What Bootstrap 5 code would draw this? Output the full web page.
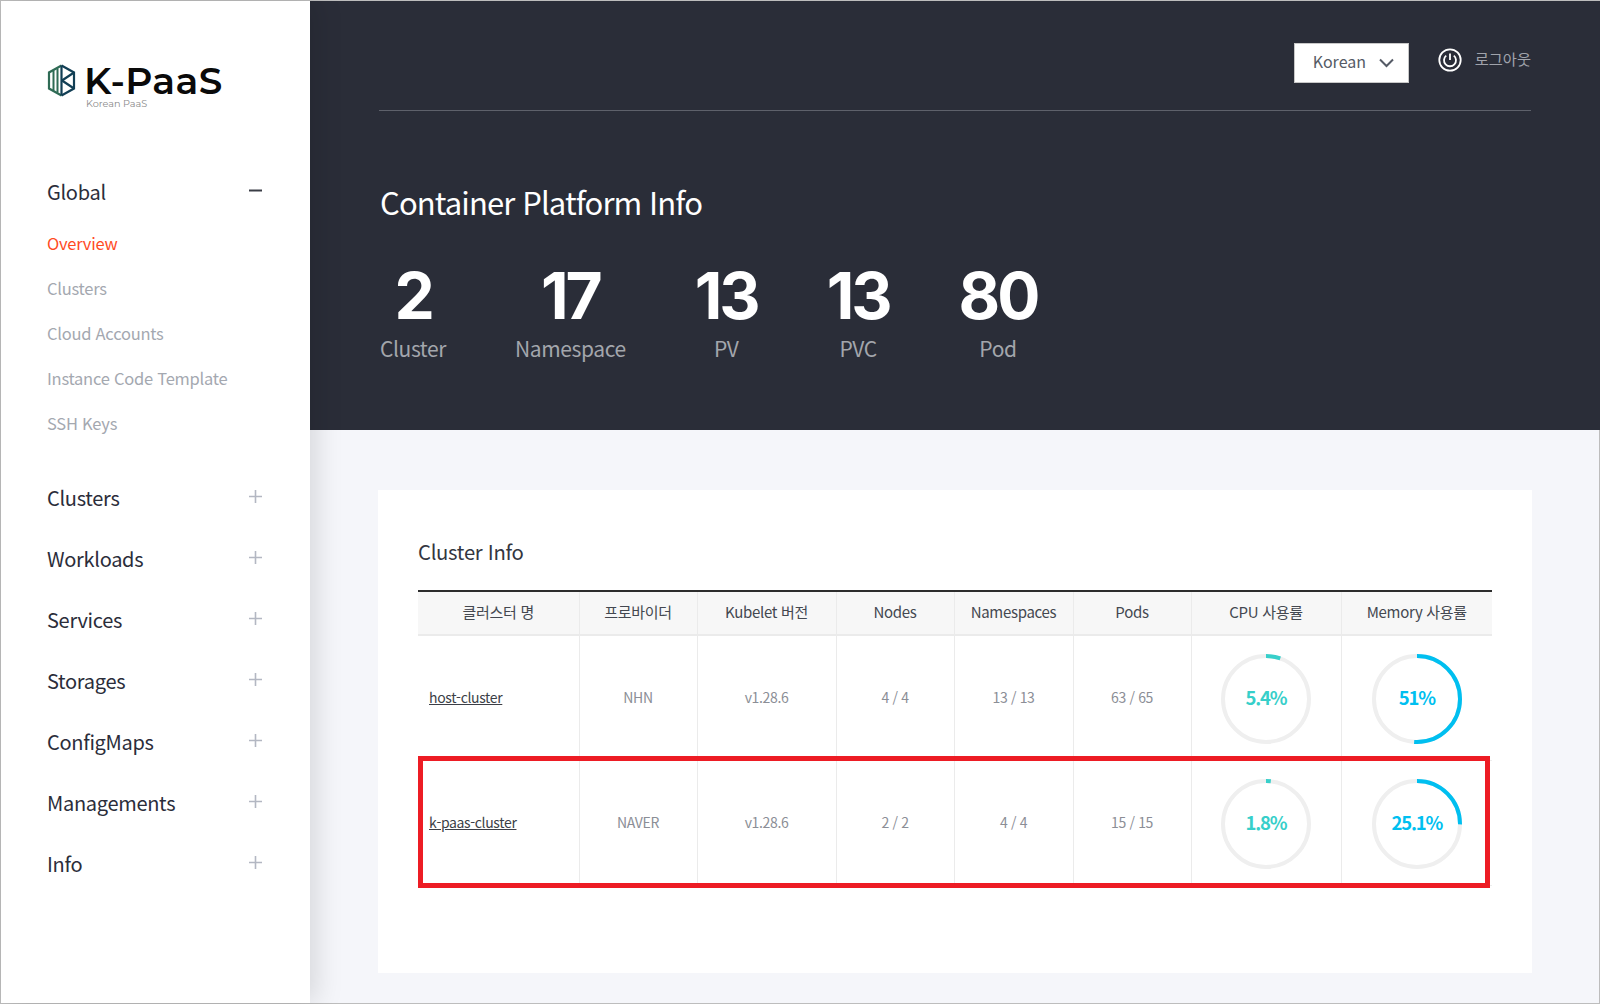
<!DOCTYPE html>
<html lang="ko">
  <head>
    <meta charset="UTF-8" />
    <meta name="viewport" content="width=device-width, initial-scale=1.0" />
    <title>K-PaaS Overview</title>
    <link
      href="https://cdn.jsdelivr.net/npm/bootstrap@5.3.0/dist/css/bootstrap.min.css"
      rel="stylesheet"
    />
    <style>
      html, body {
        height: 100%;
        margin: 0;
        overflow: hidden;
      }

      body {
        font-family: "Noto Sans CJK KR", "Noto Sans", sans-serif;
        background: #f5f6fa;
      }

      .page-shell {
        height: 1004px;
        border: 1px solid #bdbdbd;
      }

      /* sidebar */
      .side-panel {
        width: 309px;
        flex: none;
        background: #fff;
        padding: 65px 46px 0;
        box-shadow: 6px 0 26px rgba(0, 0, 0, 0.13);
        position: relative;
        z-index: 2;
      }

      .brand-row {
        height: 46px;
        margin-bottom: 49px;
      }

      .brand-logo {
        margin-top: -2px;
      }

      .brand-name {
        font-family: "Montserrat", Lato, "Noto Sans", sans-serif;
        font-size: 37.5px;
        line-height: 29px;
        font-weight: 600;
        color: #0a0a0a;
        letter-spacing: 0.4px;
      }

      .brand-sub {
        font-family: "Montserrat", Lato, "Noto Sans", sans-serif;
        font-size: 9.7px;
        line-height: 12px;
        color: #8a8a8a;
        margin-top: 3px;
        padding-left: 2px;
      }

      .menu-head {
        height: 61px;
        font-size: 20px;
        letter-spacing: -0.3px;
        color: #2b2d3a;
        padding-right: 2px;
      }

      .menu-head svg {
        margin-top: -2px;
      }

      .menu-sub {
        margin: -1px 0 21px;
      }

      .menu-sub a {
        display: flex;
        align-items: center;
        height: 45px;
        font-size: 16.5px;
        letter-spacing: -0.25px;
        color: #a4a8b0;
        text-decoration: none;
      }

      .menu-sub a.is-current {
        color: #ff4b1f;
      }

      /* header band */
      .top-band {
        height: 429px;
        background: #2a2d38;
        padding: 0 69px 0 69px;
      }

      .top-bar {
        height: 110px;
        border-bottom: 1px solid #5e616b;
        padding-bottom: 27px;
      }

      .lang-btn {
        width: 115px;
        height: 40px;
        background: #fff;
        border: 1px solid #c8c8c8;
        border-radius: 0;
        color: #555b66;
        font-size: 16px;
        padding: 0 14px 4px 18px;
      }

      .logout-link {
        color: #a0a3ab;
        font-size: 15.3px;
        text-decoration: none;
        margin-left: 29px;
        gap: 13px;
        margin-bottom: 11px;
      }

      .logout-text {
        padding-bottom: 2px;
      }

      .band-title {
        font-size: 31px;
        line-height: 44px;
        font-weight: 400;
        color: #fff;
        margin: 69px 0 0 1px;
        letter-spacing: -0.9px;
      }

      .stat-row {
        gap: 69px;
        margin: 39px 0 0 1px;
      }

      .stat-num {
        font-family: Inter, "Noto Sans", sans-serif;
        font-size: 64px;
        line-height: 66px;
        font-weight: 700;
        letter-spacing: -3px;
        color: #fff;
      }

      .stat-label {
        font-size: 21px;
        line-height: 30px;
        letter-spacing: -0.4px;
        color: #a3a6ac;
        margin-top: 4px;
      }

      /* card */
      .info-wrap {
        padding: 60px 68px 0;
      }

      .info-panel {
        background: #fff;
        height: 483px;
        padding: 45px 40px 0;
      }

      .info-title {
        font-size: 20.3px;
        line-height: 32px;
        font-weight: 400;
        letter-spacing: -0.3px;
        color: #33363f;
        margin: 0 0 23px;
      }

      .table-box {
        position: relative;
        width: 1074px;
      }

      .cluster-table {
        table-layout: fixed;
        width: 1074px;
        margin: 0;
        border-top: 2px solid #2d2d2d;
      }

      .cluster-table th {
        height: 44px;
        padding: 0 0 2px;
        background: #f7f7f7;
        border-bottom: 2px solid #ebebeb;
        font-size: 15px;
        letter-spacing: -0.3px;
        font-weight: 400;
        color: #444850;
        text-align: center;
        vertical-align: middle;
      }

      .cluster-table td {
        height: 125px;
        padding: 0;
        border-bottom: 1px solid #ededed;
        font-size: 14px;
        letter-spacing: -0.35px;
        color: #8b8e96;
        text-align: center;
        vertical-align: middle;
      }

      .cluster-table th + th,
      .cluster-table td + td {
        border-left: 1px solid #ebebeb;
      }

      .cluster-table td.name-cell {
        text-align: left;
        padding-left: 11px;
      }

      .name-cell a {
        color: #3c3f47;
      }

      .gauge-box {
        position: relative;
        width: 90px;
        height: 90px;
        margin: 2px auto 0;
      }

      .gauge-box svg {
        display: block;
        transform: rotate(-90deg);
      }

      .gauge-text {
        position: absolute;
        inset: 0;
        padding-bottom: 2px;
        font-size: 18.5px;
        font-weight: 700;
        letter-spacing: -1.2px;
      }

      .tone-cpu { color: #37cfca; }
      .tone-mem { color: #00bff0; }

      .mark-box {
        position: absolute;
        left: 0;
        top: 166px;
        width: 1072px;
        height: 132px;
        border: 5px solid #ed1c24;
        pointer-events: none;
      }
    </style>
  </head>
  <body>
    <div class="page-shell d-flex">
      <aside class="side-panel">
        <div class="brand-row d-flex gap-2">
          <svg class="brand-logo" width="29" height="33" viewBox="0 0 29 33" fill="none">
            <path d="M14.5 1.5 L2 8.5 V24.5 L14.5 31.5" stroke="#2f6b55" stroke-width="2.2" />
            <path d="M6.5 6.5 V26.5 M10.5 4.5 V28.5" stroke="#2f6b55" stroke-width="2" />
            <path d="M14.5 1.5 V31.5" stroke="#123f55" stroke-width="2.2" />
            <path d="M14.5 1.5 L27 8.5 V24.5 L14.5 31.5" stroke="#123f55" stroke-width="2.2" />
            <path d="M15 16.5 L27 8.5 M15 16.5 L27 24.5" stroke="#123f55" stroke-width="2.2" />
          </svg>
          <div>
            <div class="brand-name">K-PaaS</div>
            <div class="brand-sub">Korean PaaS</div>
          </div>
        </div>

        <div class="menu-head d-flex align-items-center justify-content-between">
          <span>Global</span>
          <svg width="13" height="13" viewBox="0 0 13 13"><path d="M0 6.5 H13" stroke="#3a3d46" stroke-width="2" /></svg>
        </div>
        <nav class="menu-sub">
          <a href="#" class="is-current">Overview</a>
          <a href="#">Clusters</a>
          <a href="#">Cloud Accounts</a>
          <a href="#">Instance Code Template</a>
          <a href="#">SSH Keys</a>
        </nav>

        <div id="menuList"></div>
      </aside>

      <main class="flex-grow-1">
        <section class="top-band">
          <div class="top-bar d-flex align-items-end justify-content-end">
            <button class="lang-btn btn d-flex align-items-center justify-content-between" type="button">
              <span>Korean</span>
              <svg class="mt-1" width="15" height="10" viewBox="0 0 15 10" fill="none"><path d="M1 1.5 L7.5 8 L14 1.5" stroke="#555b66" stroke-width="2" /></svg>
            </button>
            <a href="#" class="logout-link d-flex align-items-center">
              <svg width="24" height="24" viewBox="0 0 24 24" fill="none">
                <circle cx="12" cy="12" r="10.7" stroke="#fff" stroke-width="1.8" />
                <path d="M8.2 7.6 A6 6 0 1 0 15.8 7.6 M12 5.4 V12" stroke="#fff" stroke-width="1.8" />
              </svg>
              <span class="logout-text">로그아웃</span>
            </a>
          </div>
          <h2 class="band-title">Container Platform Info</h2>
          <div class="stat-row d-flex text-center" id="statRow"></div>
        </section>

        <section class="info-wrap">
          <div class="info-panel">
            <h3 class="info-title">Cluster Info</h3>
            <div class="table-box">
              <table class="cluster-table">
                <colgroup>
                  <col style="width: 161px" /><col style="width: 118px" /><col style="width: 139px" /><col style="width: 118px" />
                  <col style="width: 119px" /><col style="width: 118px" /><col style="width: 150px" /><col style="width: 151px" />
                </colgroup>
                <thead>
                  <tr>
                    <th>클러스터 명</th><th>프로바이더</th><th>Kubelet 버전</th><th>Nodes</th>
                    <th>Namespaces</th><th>Pods</th><th>CPU 사용률</th><th>Memory 사용률</th>
                  </tr>
                </thead>
                <tbody id="clusterRows"></tbody>
              </table>
              <div class="mark-box"></div>
            </div>
          </div>
        </section>
      </main>
    </div>

    <script>
      let menus = ["Clusters", "Workloads", "Services", "Storages", "ConfigMaps", "Managements", "Info"];
      let stats = [[2, "Cluster"], [17, "Namespace"], [13, "PV"], [13, "PVC"], [80, "Pod"]];
      let clusters = [
        { name: "host-cluster", provider: "NHN", version: "v1.28.6", nodes: "4 / 4", ns: "13 / 13", pods: "63 / 65", cpu: 5.4, mem: 51 },
        { name: "k-paas-cluster", provider: "NAVER", version: "v1.28.6", nodes: "2 / 2", ns: "4 / 4", pods: "15 / 15", cpu: 1.8, mem: 25.1 },
      ];

      function gauge(value, tone, color) {
        let len = 2 * Math.PI * 43;
        return `
          <div class="gauge-box ${tone}">
            <svg width="90" height="90" viewBox="0 0 90 90" fill="none">
              <circle cx="45" cy="45" r="43" stroke="#efefef" stroke-width="4" />
              <circle cx="45" cy="45" r="43" stroke="${color}" stroke-width="4" stroke-dasharray="${(len * value) / 100} ${len}" />
            </svg>
            <div class="gauge-text d-flex align-items-center justify-content-center">${value}%</div>
          </div>`;
      }

      document.getElementById("menuList").innerHTML = menus
        .map(
          (m) => `
          <div class="menu-head d-flex align-items-center justify-content-between">
            <span>${m}</span>
            <svg width="13" height="13" viewBox="0 0 13 13"><path d="M0 6.5 H13 M6.5 0 V13" stroke="#b3b7c2" stroke-width="1.6" /></svg>
          </div>`
        )
        .join("");

      document.getElementById("statRow").innerHTML = stats
        .map(
          (s) => `
          <div>
            <div class="stat-num">${s[0]}</div>
            <div class="stat-label">${s[1]}</div>
          </div>`
        )
        .join("");

      document.getElementById("clusterRows").innerHTML = clusters
        .map(
          (c) => `
          <tr>
            <td class="name-cell"><a href="#">${c.name}</a></td>
            <td>${c.provider}</td>
            <td>${c.version}</td>
            <td>${c.nodes}</td>
            <td>${c.ns}</td>
            <td>${c.pods}</td>
            <td>${gauge(c.cpu, "tone-cpu", "#37cfca")}</td>
            <td>${gauge(c.mem, "tone-mem", "#00bff0")}</td>
          </tr>`
        )
        .join("");
    </script>
    <script src="https://cdn.jsdelivr.net/npm/bootstrap@5.3.0/dist/js/bootstrap.bundle.min.js"></script>
  </body>
</html>
